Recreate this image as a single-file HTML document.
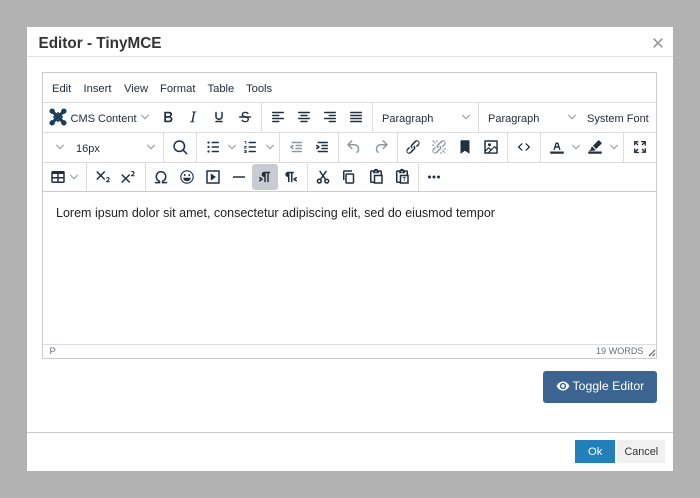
<!DOCTYPE html>
<html><head><meta charset="utf-8"><style>
html,body{margin:0;padding:0}
body{width:700px;height:498px;background:#b2b2b2;position:relative;overflow:hidden;font-family:"Liberation Sans",sans-serif;color:#222f3e}
div,span,svg{position:absolute;display:block}
.t{white-space:nowrap;font-size:12px;line-height:14px}
.d{width:1px;background:#ddd}
.r1{top:103px;height:29px}.r2{top:133px;height:29px}.r3{top:163px;height:28px}
.h{height:1px;background:#ddd;left:43px;width:613px}
svg{fill:#222f3e}
svg.i{width:18px;height:18px;margin:3px 0 0 3px}
svg.c{width:8px;height:8px;margin:1px 0 0 1px;fill:#222f3e;opacity:.4}
</style></head><body>
<svg style="width:0;height:0"><defs>
<symbol id="chev" viewBox="0 0 10 10"><path d="M8.7 2.2c.3-.3.8-.3 1 0 .4.4.4.9 0 1.2L5.7 7.8c-.3.3-.9.3-1.2 0L.2 3.4a.8.8 0 0 1 0-1.2c.3-.3.8-.3 1.1 0L5 6l3.7-3.8z"/></symbol>
<symbol id="bold" viewBox="0 0 24 24"><path d="M7.8 19c-.3 0-.5 0-.6-.2l-.2-.5V5.7c0-.2 0-.4.2-.5l.6-.2h5c1.5 0 2.7.3 3.5 1 .7.6 1.1 1.4 1.1 2.5a3 3 0 0 1-.6 1.9c-.4.6-1 1-1.6 1.2.4.1.9.3 1.3.6s.8.7 1 1.2c.3.4.4 1 .4 1.6 0 1.3-.4 2.3-1.3 3-.8.7-2.1 1-3.8 1H7.8zm5-8.3c.6 0 1.2-.1 1.6-.5.4-.3.6-.7.6-1.3 0-1.1-.8-1.7-2.3-1.7H9.3v3.5h3.4zm.5 6c.7 0 1.3-.1 1.7-.4.4-.4.6-.9.6-1.5s-.2-1-.7-1.4c-.4-.3-1-.4-2-.4H9.4v3.8h4z"/></symbol>
<symbol id="italic" viewBox="0 0 24 24"><path d="M16.7 4.7l-.1.9h-.3c-.6 0-1 0-1.4.3-.3.3-.4.6-.5 1.1l-2.1 9.8v.6c0 .5.4.8 1.4.8h.2l-.2.8H8l.2-.8h.2c1.1 0 1.8-.5 2-1.5l2-9.8.1-.5c0-.6-.4-.8-1.4-.8h-.3l.2-.9h5.8z"/></symbol>
<symbol id="under" viewBox="0 0 24 24"><path d="M16 5c.6 0 1 .4 1 1v5.5a4 4 0 0 1-.4 1.8l-1 1.4a5.3 5.3 0 0 1-5.5 1 5 5 0 0 1-1.6-1c-.5-.4-.8-.9-1.1-1.4a4 4 0 0 1-.4-1.8V6c0-.6.4-1 1-1s1 .4 1 1v5.5c0 .3 0 .6.2 1l.6.7a3.3 3.3 0 0 0 2.2.8 3.4 3.4 0 0 0 2.2-.8c.3-.2.4-.5.6-.8l.2-.9V6c0-.6.4-1 1-1zM8 17h8c.6 0 1 .4 1 1s-.4 1-1 1H8a1 1 0 0 1 0-2z"/></symbol>
<symbol id="strike" viewBox="0 0 24 24"><path d="M15.6 8.5c-.5-.7-1-1.1-1.3-1.3-.6-.4-1.3-.6-2-.6-2.7 0-2.8 1.7-2.8 2.1 0 1.6 1.8 2 3.2 2.3 4.4.9 4.6 2.8 4.6 3.9 0 1.4-.7 4.1-5 4.1A6.2 6.2 0 0 1 7 16.4l1.5-1.1c.4.6 1.6 2 3.7 2 1.6 0 2.5-.4 3-1.2.4-.8.3-2-.8-2.6-.7-.4-1.6-.7-2.9-1-1-.2-3.9-.8-3.9-3.6C7.6 6 10.3 5 12.4 5c2.9 0 4.2 1.6 4.7 2.4l-1.5 1.1z"/><path d="M5 11h14a1 1 0 0 1 0 2H5a1 1 0 0 1 0-2z"/></symbol>
<symbol id="al" viewBox="0 0 24 24"><path d="M5 5h14c.6 0 1 .4 1 1s-.4 1-1 1H5a1 1 0 1 1 0-2zm0 4h8c.6 0 1 .4 1 1s-.4 1-1 1H5a1 1 0 1 1 0-2zm0 8h8c.6 0 1 .4 1 1s-.4 1-1 1H5a1 1 0 0 1 0-2zm0-4h14c.6 0 1 .4 1 1s-.4 1-1 1H5a1 1 0 0 1 0-2z"/></symbol>
<symbol id="ac" viewBox="0 0 24 24"><path d="M5 5h14c.6 0 1 .4 1 1s-.4 1-1 1H5a1 1 0 1 1 0-2zm3 4h8c.6 0 1 .4 1 1s-.4 1-1 1H8a1 1 0 1 1 0-2zm0 8h8c.6 0 1 .4 1 1s-.4 1-1 1H8a1 1 0 0 1 0-2zm-3-4h14c.6 0 1 .4 1 1s-.4 1-1 1H5a1 1 0 0 1 0-2z"/></symbol>
<symbol id="ar" viewBox="0 0 24 24"><path d="M5 5h14c.6 0 1 .4 1 1s-.4 1-1 1H5a1 1 0 1 1 0-2zm6 4h8c.6 0 1 .4 1 1s-.4 1-1 1h-8a1 1 0 0 1 0-2zm0 8h8c.6 0 1 .4 1 1s-.4 1-1 1h-8a1 1 0 0 1 0-2zm-6-4h14c.6 0 1 .4 1 1s-.4 1-1 1H5a1 1 0 0 1 0-2z"/></symbol>
<symbol id="aj" viewBox="0 0 24 24"><path d="M5 5h14c.6 0 1 .4 1 1s-.4 1-1 1H5a1 1 0 1 1 0-2zm0 4h14c.6 0 1 .4 1 1s-.4 1-1 1H5a1 1 0 1 1 0-2zm0 4h14c.6 0 1 .4 1 1s-.4 1-1 1H5a1 1 0 0 1 0-2zm0 4h14c.6 0 1 .4 1 1s-.4 1-1 1H5a1 1 0 0 1 0-2z"/></symbol>
<symbol id="search" viewBox="0 0 24 24"><path d="M16 17.3a8 8 0 1 1 1.4-1.4l4.3 4.4a1 1 0 0 1-1.4 1.4l-4.4-4.3zm-5-.3a6 6 0 1 0 0-12 6 6 0 0 0 0 12z"/></symbol>
<symbol id="ul" viewBox="0 0 24 24"><path d="M11 5h8c.6 0 1 .4 1 1s-.4 1-1 1h-8a1 1 0 0 1 0-2zm0 6h8c.6 0 1 .4 1 1s-.4 1-1 1h-8a1 1 0 0 1 0-2zm0 6h8c.6 0 1 .4 1 1s-.4 1-1 1h-8a1 1 0 0 1 0-2z"/><circle cx="6" cy="6" r="1.5"/><circle cx="6" cy="12" r="1.5"/><circle cx="6" cy="18" r="1.5"/></symbol>
<symbol id="ol" viewBox="0 0 24 24"><path d="M11 5h8c.6 0 1 .4 1 1s-.4 1-1 1h-8a1 1 0 0 1 0-2zm0 6h8c.6 0 1 .4 1 1s-.4 1-1 1h-8a1 1 0 0 1 0-2zm0 6h8c.6 0 1 .4 1 1s-.4 1-1 1h-8a1 1 0 0 1 0-2zM4.500 4H7v4H6V5H4.500zM4 10.500h3.500v1L5.500 13H7.500v1H4v-1l2.300-1.500H4zM4 16h3.500v4H4v-1h2.500v-.5H5v-1h1.500V17H4z"/></symbol>
<symbol id="outd" viewBox="0 0 24 24"><path d="M7 5h12c.6 0 1 .4 1 1s-.4 1-1 1H7a1 1 0 1 1 0-2zm5 4h7c.6 0 1 .4 1 1s-.4 1-1 1h-7a1 1 0 0 1 0-2zm0 4h7c.6 0 1 .4 1 1s-.4 1-1 1h-7a1 1 0 0 1 0-2zm-5 4h12a1 1 0 0 1 0 2H7a1 1 0 0 1 0-2zm1.600-3.800a1 1 0 0 1-1.200 1.600l-3-2a1 1 0 0 1 0-1.600l3-2a1 1 0 0 1 1.200 1.600L6.800 12l1.800 1.200z"/></symbol>
<symbol id="ind" viewBox="0 0 24 24"><path d="M7 5h12c.6 0 1 .4 1 1s-.4 1-1 1H7a1 1 0 1 1 0-2zm5 4h7c.6 0 1 .4 1 1s-.4 1-1 1h-7a1 1 0 0 1 0-2zm0 4h7c.6 0 1 .4 1 1s-.4 1-1 1h-7a1 1 0 0 1 0-2zm-5 4h12a1 1 0 0 1 0 2H7a1 1 0 0 1 0-2zm-2.600-3.800L6.200 12l-1.800-1.200a1 1 0 0 1 1.200-1.600l3 2a1 1 0 0 1 0 1.600l-3 2a1 1 0 1 1-1.200-1.600z"/></symbol>
<symbol id="undo" viewBox="0 0 24 24"><path d="M6.400 8H12c3.700 0 6.200 2 6.800 5.100.6 2.700-.4 5.600-2.300 6.800a1 1 0 0 1-1-1.800c1.100-.6 1.800-2.700 1.400-4.600-.5-2.100-2.100-3.500-4.900-3.500H6.400l3.300 3.300a1 1 0 1 1-1.400 1.400l-5-5a1 1 0 0 1 0-1.400l5-5a1 1 0 0 1 1.400 1.400L6.400 8z"/></symbol>
<symbol id="redo" viewBox="0 0 24 24"><path d="M17.600 10H12c-2.800 0-4.400 1.400-4.900 3.500-.4 2 .3 4 1.400 4.600a1 1 0 1 1-1 1.800c-2-1.200-2.900-4.100-2.300-6.800.6-3 3-5.100 6.800-5.100h5.600l-3.300-3.300a1 1 0 1 1 1.400-1.400l5 5a1 1 0 0 1 0 1.400l-5 5a1 1 0 0 1-1.400-1.400l3.300-3.300z"/></symbol>
<symbol id="link" viewBox="0 0 24 24"><path d="M6.200 12.300a1 1 0 0 1 1.400 1.400l-2 2a2 2 0 1 0 2.600 2.800l4.800-4.800a1 1 0 0 0 0-1.400 1 1 0 1 1 1.400-1.300 2.900 2.900 0 0 1 0 4L9.600 20a3.900 3.900 0 0 1-5.500-5.500l2-2zm11.600-.6a1 1 0 0 1-1.400-1.400l2-2a2 2 0 1 0-2.600-2.800L11 10.300a1 1 0 0 0 0 1.400A1 1 0 1 1 9.600 13a2.900 2.900 0 0 1 0-4L14.400 4a3.900 3.900 0 0 1 5.500 5.500l-2 2z"/></symbol>
<symbol id="unlink" viewBox="0 0 24 24"><path d="M6.200 12.300a1 1 0 0 1 1.400 1.400l-2.100 2a2 2 0 1 0 2.700 2.800l4.800-4.800a1 1 0 0 0 0-1.400 1 1 0 1 1 1.400-1.300 2.900 2.900 0 0 1 0 4l-4.800 4.800a3.900 3.900 0 0 1-5.500-5.500l2-2zm11.600-.6a1 1 0 0 1-1.400-1.400l2.100-2a2 2 0 1 0-2.700-2.800L11 10.300a1 1 0 0 0 0 1.400A1 1 0 1 1 9.600 13a2.900 2.900 0 0 1 0-4L14.400 4a3.900 3.900 0 0 1 5.500 5.500l-2 2zM7.600 6.300a.8.8 0 0 1-1 1.100L3.300 4.200a.7.7 0 1 1 1-1l3.200 3.100zM5.100 8.600a.8.8 0 0 1 0 1.500H3a.8.8 0 0 1 0-1.500H5zm5-3.500a.8.8 0 0 1-1.500 0V3a.8.8 0 0 1 1.500 0V5zm6 11.800a.8.8 0 0 1 1-1l3.200 3.200a.8.8 0 0 1-1 1L16 17zm-2.200 2a.8.8 0 0 1 1.500 0V21a.8.8 0 0 1-1.500 0V19zm5-3.500a.7.7 0 1 1 0-1.500H21a.8.8 0 0 1 0 1.500H19z"/></symbol>
<symbol id="bm" viewBox="0 0 24 24"><path d="M6 4v17l6-4 6 4V4c0-.6-.4-1-1-1H7a1 1 0 0 0-1 1z"/></symbol>
<symbol id="img" viewBox="0 0 24 24"><path d="M5 15.700l3.300-3.200c.3-.3.7-.3 1 0L12 15l4.100-4c.3-.4.8-.4 1 0l2 1.900V5H5v10.700zM5 18V19h3l2.800-2.900-2-2L5 17.900zm14-3l-2.500-2.400-6.400 6.500H19v-4zM4 3h16c.6 0 1 .4 1 1v16c0 .6-.4 1-1 1H4a1 1 0 0 1-1-1V4c0-.6.4-1 1-1zm6 8a2 2 0 1 0 0-4 2 2 0 0 0 0 4z"/></symbol>
<symbol id="code" viewBox="0 0 24 24"><path d="M9.800 15.700c.3.3.3.8 0 1-.3.4-.9.4-1.200 0l-4.400-4.100a.8.8 0 0 1 0-1.200l4.400-4.200c.3-.3.9-.3 1.200 0 .3.3.3.8 0 1.100L6 12l3.800 3.700zm4.400 0L18 12l-3.800-3.700a.8.8 0 0 1 0-1.100c.3-.3.900-.3 1.200 0l4.400 4.200c.3.300.3.900 0 1.200l-4.400 4.200c-.3.300-.9.300-1.200 0a.8.8 0 0 1 0-1z"/></symbol>
<symbol id="tc" viewBox="0 0 24 24"><path d="M3 18h18v3H3z"/><path d="M8.700 16h-.8a.5.5 0 0 1-.5-.6l2.700-9c.1-.3.300-.4.500-.4h2.800c.2 0 .4.100.5.400l2.700 9a.5.5 0 0 1-.5.600h-.8a.5.5 0 0 1-.4-.4l-.7-2.200c0-.2-.3-.4-.5-.4h-3.400c-.2 0-.4.200-.5.400l-.7 2.200c0 .2-.3.400-.4.400zm2.600-7.600l-.6 2a.5.5 0 0 0 .5.600h1.600a.5.5 0 0 0 .5-.6l-.6-2c0-.3-.3-.4-.5-.4h-.4c-.2 0-.4.100-.5.400z"/></symbol>
<symbol id="hl" viewBox="0 0 24 24"><path d="M3 18h18v3H3z"/><path d="M17.700 3.300l2.900 2.900c.4.400.4 1 0 1.400l-7 7-4.300-4.300 7-7c.4-.4 1-.4 1.400 0zM8.300 11.300l4.300 4.300-1.500 1.400H7l-.6.500H4l2.800-2.800v-2z"/></symbol>
<symbol id="fs" viewBox="0 0 24 24"><path d="M15.300 10l-1.200-1.300 2.900-3h-2.300a.9.900 0 1 1 0-1.700H19c.5 0 .9.400.9.900v4.400a.9.900 0 1 1-1.800 0V7l-2.900 3zm0 4l3 3v-2.300a.9.900 0 1 1 1.700 0V19c0 .5-.4.900-.9.900h-4.400a.9.900 0 1 1 0-1.800H17l-3-2.900 1.300-1.200zM10 15.400l-2.900 3h2.300a.9.900 0 1 1 0 1.700H5a.9.900 0 0 1-1-.9v-4.400a.9.900 0 1 1 1.800 0V17l2.900-3 1.200 1.300zM8.700 10L5.700 7v2.300a.9.900 0 0 1-1.700 0V5c0-.5.400-.9.900-.9h4.400a.9.900 0 0 1 0 1.800H7l3 2.900-1.300 1.200z"/></symbol>
<symbol id="table" viewBox="0 0 24 24"><path d="M19 4a2 2 0 0 1 2 2v12a2 2 0 0 1-2 2H5a2 2 0 0 1-2-2V6c0-1.100.9-2 2-2h14zM5 14v4h6v-4H5zm14 0h-6v4h6v-4zm0-6h-6v4h6V8zM5 12h6V8H5v4z"/></symbol>
<symbol id="sub" viewBox="0 0 24 24"><path d="M10.400 10l4.600 4.600-1.400 1.400L9 11.400 4.400 16 3 14.600 7.600 10 3 5.400 4.400 4 9 8.600 13.600 4 15 5.400 10.400 10zM21 19h-5v-1l1-.8 1.700-1.600c.3-.4.500-.8.500-1.200 0-.3 0-.6-.2-.7-.2-.2-.5-.3-.9-.3a2 2 0 0 0-.8.200l-.7.300-.4-1.100 1-.6 1.200-.2c.8 0 1.400.3 1.800.7.400.4.600.9.600 1.500s-.2 1.100-.5 1.600a8 8 0 0 1-1.300 1.300l-.6.600h2.600V19z"/></symbol>
<symbol id="sup" viewBox="0 0 24 24"><path d="M15 9.400L10.400 14l4.600 4.600-1.400 1.400L9 15.400 4.400 20 3 18.600 7.600 14 3 9.400 4.400 8 9 12.600 13.600 8 15 9.400zm5.900 1.600h-5v-1l1-.8 1.700-1.600c.3-.5.500-.9.500-1.300 0-.3 0-.5-.2-.7-.2-.2-.5-.3-.9-.3l-.8.200-.7.400-.4-1.200c.2-.2.500-.4 1-.5.300-.2.800-.2 1.200-.2.800 0 1.400.2 1.800.6.400.4.600 1 .6 1.600 0 .5-.2 1-.5 1.500l-1.300 1.400-.6.500h2.600V11z"/></symbol>
<symbol id="omega" viewBox="0 0 24 24"><path d="M4.500 19.500H10v-1.700c-2.500-1.100-4.300-3.300-4.300-6.200 0-4 2.800-6.600 6.300-6.600s6.300 2.600 6.300 6.600c0 2.900-1.800 5.100-4.300 6.200v1.700h5.500" fill="none" stroke="#222f3e" stroke-width="2" stroke-linecap="round"/></symbol>
<symbol id="emoji" viewBox="0 0 24 24"><path d="M12 3a9 9 0 1 0 0 18 9 9 0 0 0 0-18zm0 16.500a7.500 7.500 0 1 1 0-15 7.500 7.500 0 0 1 0 15z"/><ellipse cx="9" cy="9.500" rx="1.100" ry="1.500"/><ellipse cx="15" cy="9.500" rx="1.100" ry="1.500"/><path d="M7 13h10c0 2.800-2.200 4.500-5 4.500S7 15.800 7 13z"/></symbol>
<symbol id="embed" viewBox="0 0 24 24"><path d="M4 3h16c.6 0 1 .4 1 1v16c0 .6-.4 1-1 1H4a1 1 0 0 1-1-1V4c0-.6.4-1 1-1zm1 2v14h14V5H5zm4.800 2.600l5.600 4a.5.5 0 0 1 0 .8l-5.600 4A.5.5 0 0 1 9 16V8a.5.5 0 0 1 .8-.4z"/></symbol>
<symbol id="hr" viewBox="0 0 24 24"><path d="M4 11h16v2H4z"/></symbol>
<symbol id="ltr" viewBox="0 0 24 24"><path d="M11 5h7a1 1 0 0 1 0 2h-1v11a1 1 0 0 1-2 0V7h-2v11a1 1 0 0 1-2 0v-6c-.5 0-1 0-1.400-.3A3.400 3.400 0 0 1 7.800 10a3.300 3.300 0 0 1 0-2.800 3.400 3.400 0 0 1 1.800-1.800L11 5zM4.400 16.200L6.200 15l-1.800-1.200a1 1 0 0 1 1.200-1.600l3 2a1 1 0 0 1 0 1.600l-3 2a1 1 0 1 1-1.200-1.600z"/></symbol>
<symbol id="rtl" viewBox="0 0 24 24"><path d="M8 5h7a1 1 0 0 1 0 2h-1v11a1 1 0 0 1-2 0V7h-2v11a1 1 0 0 1-2 0v-6c-.5 0-1 0-1.400-.3A3.400 3.400 0 0 1 4.800 10a3.300 3.300 0 0 1 0-2.800 3.400 3.400 0 0 1 1.800-1.800L8 5zM19.600 16.200L17.800 15l1.800-1.200a1 1 0 0 0-1.200-1.600l-3 2a1 1 0 0 0 0 1.600l3 2a1 1 0 1 0 1.200-1.600z"/></symbol>
<symbol id="cut" viewBox="0 0 24 24"><g fill="none" stroke="#222f3e" stroke-width="2" stroke-linecap="round"><circle cx="7" cy="17.500" r="2.500"/><circle cx="17" cy="17.500" r="2.500"/><path d="M8.500 15.500L16 4.500M15.500 15.500L8 4.500"/></g></symbol>
<symbol id="copy" viewBox="0 0 24 24"><path d="M16 3H6a2 2 0 0 0-2 2v11h2V5h10V3zm1 4a2 2 0 0 1 2 2v10a2 2 0 0 1-2 2H9a2 2 0 0 1-2-2V9c0-1.100.9-2 2-2h8zm0 2H9v10h8V9z"/></symbol>
<symbol id="paste" viewBox="0 0 24 24"><path d="M18 9V5h-2v1c0 .6-.4 1-1 1H9a1 1 0 0 1-1-1V5H6v13h3V9h9zM9 20H6a2 2 0 0 1-2-2V5c0-1.100.9-2 2-2h3.200A3 3 0 0 1 12 1a3 3 0 0 1 2.800 2H18a2 2 0 0 1 2 2v4h1v12H9v-1zm2-9v8h8v-8h-8zm1-7a1 1 0 0 0 0 2 1 1 0 0 0 0-2z"/></symbol>
<symbol id="pastet" viewBox="0 0 24 24"><path d="M18 9V5h-2v1c0 .6-.4 1-1 1H9a1 1 0 0 1-1-1V5H6v13h3V9h9zM9 20H6a2 2 0 0 1-2-2V5c0-1.100.9-2 2-2h3.200A3 3 0 0 1 12 1a3 3 0 0 1 2.800 2H18a2 2 0 0 1 2 2v4h1v12H9v-1zm2-9v8h8v-8h-8zm1-7a1 1 0 0 0 0 2 1 1 0 0 0 0-2zm1 8h4v1h-1.500v4h-1v-4H13v-1z"/></symbol>
<symbol id="more" viewBox="0 0 24 24"><circle cx="6" cy="12" r="2"/><circle cx="12" cy="12" r="2"/><circle cx="18" cy="12" r="2"/></symbol>
</defs></svg>

<div style="left:27px;top:27px;width:646px;height:444px;background:#fff"></div>
<div style="left:27px;top:56px;width:646px;height:1px;background:#e2e2e2"></div>
<div class="t" style="left:38.500px;top:35px;font-size:15.300px;line-height:18px;font-weight:bold;color:#333">Editor - TinyMCE</div>
<svg style="left:652.500px;top:37.500px;width:10px;height:10px" viewBox="0 0 10 10"><path d="M.7.7L9.300 9.300M9.300.7L.7 9.300" stroke="#999" stroke-width="1.700" fill="none"/></svg>

<div style="left:42px;top:72px;width:613px;height:285px;border:1px solid #ccc"></div>
<div class="h" style="top:102px"></div><div class="h" style="top:132px"></div><div class="h" style="top:162px"></div><div class="h" style="top:191px;background:#ccc"></div><div class="h" style="top:344px"></div>

<span class="t" style="left:52px;top:82px;font-size:11.200px">Edit</span>
<span class="t" style="left:83.500px;top:82px;font-size:11.200px">Insert</span>
<span class="t" style="left:124px;top:82px;font-size:11.200px">View</span>
<span class="t" style="left:160px;top:82px;font-size:11.200px">Format</span>
<span class="t" style="left:207.500px;top:82px;font-size:11.200px">Table</span>
<span class="t" style="left:246px;top:82px;font-size:11.200px">Tools</span>

<svg style="left:49px;top:108px;width:18px;height:18px" viewBox="0 0 20 20"><g stroke="#1c3d5a" fill="none" stroke-width="3.500"><path d="M4 4L16 16M16 4L4 16"/><path d="M10 5.500L14.500 10L10 14.500L5.500 10z" stroke-width="1.800"/></g><g fill="#1c3d5a"><circle cx="3.500" cy="3.500" r="3"/><circle cx="16.500" cy="3.500" r="3"/><circle cx="3.500" cy="16.500" r="3"/><circle cx="16.500" cy="16.500" r="3"/></g></svg>
<span class="t" style="left:70.500px;top:112px;font-size:11px">CMS Content</span>
<svg class="c" style="left:140px;top:112px"><use href="#chev"/></svg>
<svg class="i" style="left:156px;top:105px"><use href="#bold"/></svg>
<svg class="i" style="left:181px;top:105px"><use href="#italic"/></svg>
<svg class="i" style="left:207px;top:105px"><use href="#under"/></svg>
<svg class="i" style="left:233px;top:105px"><use href="#strike"/></svg>
<div class="d r1" style="left:261px"></div>
<svg class="i" style="left:266px;top:105px"><use href="#al"/></svg>
<svg class="i" style="left:292px;top:105px"><use href="#ac"/></svg>
<svg class="i" style="left:318px;top:105px"><use href="#ar"/></svg>
<svg class="i" style="left:344px;top:105px"><use href="#aj"/></svg>
<div class="d r1" style="left:372px"></div>
<span class="t" style="left:382px;top:112px;font-size:11px">Paragraph</span>
<svg class="c" style="left:461px;top:112px"><use href="#chev"/></svg>
<div class="d r1" style="left:478px"></div>
<span class="t" style="left:488px;top:112px;font-size:11px">Paragraph</span>
<svg class="c" style="left:567px;top:112px"><use href="#chev"/></svg>
<span class="t" style="left:587px;top:112px;font-size:11px">System Font</span>

<svg class="c" style="left:55px;top:142px"><use href="#chev"/></svg>
<span class="t" style="left:76px;top:142px;font-size:11px">16px</span>
<svg class="c" style="left:146px;top:142px"><use href="#chev"/></svg>
<div class="d r2" style="left:163px"></div>
<svg class="i" style="left:168px;top:135px"><use href="#search"/></svg>
<div class="d r2" style="left:196px"></div>
<svg class="i" style="left:201px;top:135px"><use href="#ul"/></svg>
<svg class="c" style="left:227px;top:142px"><use href="#chev"/></svg>
<svg class="i" style="left:238px;top:135px"><use href="#ol"/></svg>
<svg class="c" style="left:265px;top:142px"><use href="#chev"/></svg>
<div class="d r2" style="left:279px"></div>
<svg class="i" style="left:284px;top:135px;opacity:.5"><use href="#outd"/></svg>
<svg class="i" style="left:310px;top:135px"><use href="#ind"/></svg>
<div class="d r2" style="left:338px"></div>
<svg class="i" style="left:342px;top:135px;opacity:.5"><use href="#undo"/></svg>
<svg class="i" style="left:369px;top:135px;opacity:.5"><use href="#redo"/></svg>
<div class="d r2" style="left:397px"></div>
<svg class="i" style="left:401px;top:135px"><use href="#link"/></svg>
<svg class="i" style="left:427px;top:135px;opacity:.5"><use href="#unlink"/></svg>
<svg class="i" style="left:453px;top:135px"><use href="#bm"/></svg>
<svg class="i" style="left:479px;top:135px"><use href="#img"/></svg>
<div class="d r2" style="left:507px"></div>
<svg class="i" style="left:512px;top:135px"><use href="#code"/></svg>
<div class="d r2" style="left:540px"></div>
<svg class="i" style="left:545px;top:135px"><use href="#tc"/></svg>
<svg class="c" style="left:571px;top:142px"><use href="#chev"/></svg>
<svg class="i" style="left:583px;top:135px"><use href="#hl"/></svg>
<svg class="c" style="left:609px;top:142px"><use href="#chev"/></svg>
<div class="d r2" style="left:623px"></div>
<svg class="i" style="left:628px;top:135px"><use href="#fs"/></svg>

<svg class="i" style="left:46px;top:165px"><use href="#table"/></svg>
<svg class="c" style="left:69px;top:172px"><use href="#chev"/></svg>
<div class="d r3" style="left:86px"></div>
<svg class="i" style="left:91px;top:165px"><use href="#sub"/></svg>
<svg class="i" style="left:116px;top:165px"><use href="#sup"/></svg>
<div class="d r3" style="left:145px"></div>
<svg class="i" style="left:149px;top:165px"><use href="#omega"/></svg>
<svg class="i" style="left:175px;top:165px"><use href="#emoji"/></svg>
<svg class="i" style="left:201px;top:165px"><use href="#embed"/></svg>
<svg class="i" style="left:227px;top:165px"><use href="#hr"/></svg>
<div style="left:252px;top:164px;width:26px;height:26px;background:#c8cbcf;border-radius:3px"></div>
<svg class="i" style="left:253px;top:165px"><use href="#ltr"/></svg>
<svg class="i" style="left:279px;top:165px"><use href="#rtl"/></svg>
<div class="d r3" style="left:307px"></div>
<svg class="i" style="left:311px;top:165px"><use href="#cut"/></svg>
<svg class="i" style="left:337px;top:165px"><use href="#copy"/></svg>
<svg class="i" style="left:364px;top:165px"><use href="#paste"/></svg>
<svg class="i" style="left:390px;top:165px"><use href="#pastet"/></svg>
<div class="d r3" style="left:418px"></div>
<svg class="i" style="left:422px;top:165px"><use href="#more"/></svg>

<div class="t" style="left:56px;top:206px;font-size:12.530px;line-height:15px;color:#222">Lorem ipsum dolor sit amet, consectetur adipiscing elit, sed do eiusmod tempor</div>

<span class="t" style="left:49.500px;top:345px;font-size:9.500px;line-height:13px;color:rgba(34,47,62,.7)">P</span>
<span class="t" style="left:596px;top:345px;font-size:9.100px;line-height:13px;color:rgba(34,47,62,.7)">19 WORDS</span>
<svg style="left:648px;top:349px;width:8px;height:8px" viewBox="0 0 9 9"><path d="M1 8L8 1M5 8L8 5" stroke="#555" stroke-width="1.200" fill="none"/></svg>

<div style="left:543px;top:371px;width:114px;height:32px;background:#3c6490;border-radius:3px"></div>
<svg style="left:556px;top:381px;width:14px;height:10px" viewBox="0 0 14 11"><path d="M7 .5C4 .5 1.500 2.500 0 5.500c1.500 3 4 5 7 5s5.500-2 7-5c-1.500-3-4-5-7-5zm0 8.500a3.500 3.500 0 1 1 0-7 3.500 3.500 0 0 1 0 7z" fill="#fff"/><circle cx="7" cy="5.500" r="1.900" fill="#fff"/></svg>
<span class="t" style="left:572.500px;top:379px;font-size:12.300px;line-height:15px;color:#fff">Toggle Editor</span>

<div style="left:27px;top:432px;width:646px;height:1px;background:#ccc"></div>
<div style="left:575px;top:440px;width:40px;height:23px;background:#2180b9"></div>
<span class="t" style="left:588px;top:445px;font-size:11.300px;color:#fff">Ok</span>
<div style="left:617px;top:440px;width:48px;height:23px;background:#f0f0f0"></div>
<span class="t" style="left:624.500px;top:445px;font-size:10.800px;color:#333">Cancel</span>
</body></html>
